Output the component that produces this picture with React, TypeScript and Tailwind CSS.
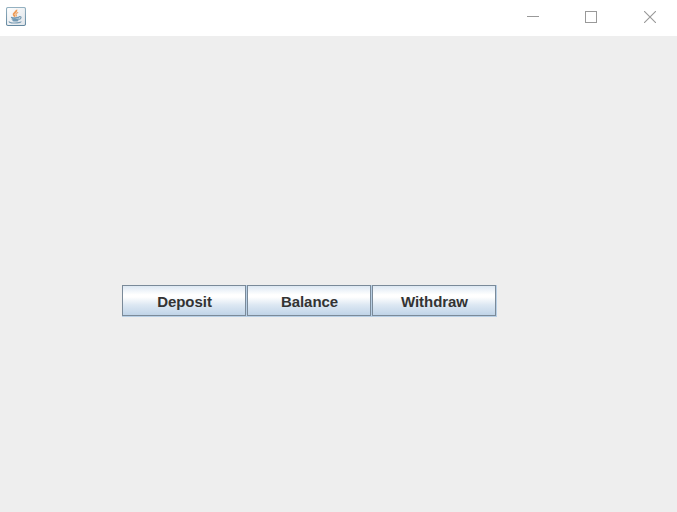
import React from "react";

function JavaIcon() {
  return (
    <svg width="20" height="20" viewBox="0 0 20 20" fill="none" aria-hidden="true">
      <defs>
        <linearGradient id="frame" x1="0" y1="0" x2="0" y2="1">
          <stop offset="0" stopColor="#94b1c1" />
          <stop offset="1" stopColor="#6488a0" />
        </linearGradient>
        <linearGradient id="face" x1="0" y1="0" x2="1" y2="1">
          <stop offset="0" stopColor="#ffffff" />
          <stop offset="1" stopColor="#dfe4e9" />
        </linearGradient>
      </defs>
      <rect x="0.5" y="0.5" width="19" height="18" rx="1.5" fill="url(#face)" stroke="url(#frame)" strokeWidth="1.1" />
      <path d="M10.500 2.800C11.200 5 6.800 5.800 7.600 7.600C7.900 8.500 8.600 9.100 9.200 9.500" stroke="#ed9a55" strokeWidth="1.800" />
      <path d="M12.200 5.300C9.800 6.200 9.500 6.900 10.200 7.800C10.700 8.500 10.400 9 9.800 9.500" stroke="#eeaa70" strokeWidth="1.300" />
      <path d="M5 10.300C7 11 11 11 13.200 10.200M5.700 11.900C8 12.600 11 12.600 12.900 11.900M6.500 13.400C8.500 14.100 10.500 14.100 12.300 13.400" stroke="#7299b4" strokeWidth="1.300" />
      <path d="M13 9.700C15.900 9.200 15.600 12 12.700 12.400M3.400 14.400C2.500 15.800 7 16.200 11 15.900C13.500 15.700 15.500 15.200 14.700 14.500" stroke="#789bb3" strokeWidth="1.200" />
    </svg>
  );
}

function WindowControls() {
  return (
    <div className="mr-[21px] mt-[11px] flex text-[#999999]">
      <svg className="mr-[46px]" width="12" height="12" aria-label="Minimize" fill="none" stroke="currentColor">
        <path d="M0 5.5H12" />
      </svg>
      <svg className="mr-[47px]" width="12" height="12" aria-label="Maximize" fill="none" stroke="currentColor">
        <rect x="0.5" y="0.5" width="11" height="11" />
      </svg>
      <svg width="12" height="12" aria-label="Close" fill="none" stroke="currentColor" strokeWidth="1.1">
        <path d="M0 0L12 12M12 0L0 12" />
      </svg>
    </div>
  );
}

function ActionButton({ children }: { children: React.ReactNode }) {
  return (
    <button className="h-8 w-[125px] border-r border-b border-[#b8cfe5]">
      <span className="flex h-[31px] w-[124px] items-center justify-center border border-[#7a8a99] bg-[linear-gradient(to_bottom,#dde8f3_0%,#ffffff_30%,#ffffff_38%,#dde8f3_65%,#c0d4e8_100%)] pt-[2px] pl-px text-[15px] leading-[17px] font-bold tracking-[-0.05px] text-[#333333]">
        {children}
      </span>
    </button>
  );
}

export default function App() {
  return (
    <div className="flex h-[512px] w-[677px] flex-col overflow-hidden bg-[#eeeeee] font-['Liberation_Sans',Arial,sans-serif]">
      <header className="flex h-9 shrink-0 items-start justify-between bg-white">
        <div className="mt-[7px] ml-1.5">
          <JavaIcon />
        </div>
        <WindowControls />
      </header>
      <main className="flex pt-[249px] pl-[122px]">
        <ActionButton>Deposit</ActionButton>
        <ActionButton>Balance</ActionButton>
        <ActionButton>Withdraw</ActionButton>
      </main>
    </div>
  );
}
